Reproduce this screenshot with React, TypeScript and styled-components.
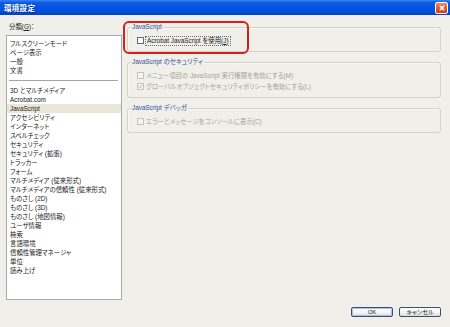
import styled, { createGlobalStyle } from "styled-components";

const GlobalStyle = createGlobalStyle`
   html, body {
      margin: 0;
      padding: 0;
      width: 450px;
      height: 327px;
      overflow: hidden;
      background: #f0efea;
   }
`;

const Window = styled.div`
   position: relative;
   width: 450px;
   height: 327px;
   display: flex;
   flex-direction: column;
   background: #f0efea;
   color: #1a1a1a;
   font-family: "Liberation Sans", "Noto Sans CJK JP", sans-serif;
   font-size: 6.4px;
   font-feature-settings: "palt";
   box-sizing: border-box;
`;

const TitleBar = styled.div`
   height: 15px;
   flex: none;
   display: flex;
   align-items: center;
   justify-content: space-between;
   padding: 0 2px 0 4px;
   background: linear-gradient(180deg, #3d83f2 0%, #0b5ae6 18%, #0054e0 55%, #004cd6 85%, #0a3fbd 100%);
`;

const Title = styled.span`
   color: #ffffff;
   font-size: 7.5px;
   font-weight: bold;
   letter-spacing: 0.3px;
   text-shadow: 1px 1px 0 rgba(0, 0, 40, 0.45);
`;

const CloseButton = styled.div`
   width: 13px;
   height: 12px;
   display: flex;
   align-items: center;
   justify-content: center;
   box-sizing: border-box;
   border: 1px solid #ffffff;
   border-radius: 2px;
   background: linear-gradient(180deg, #f08a6a 0%, #e0562f 55%, #c8401c 100%);
`;

const Body = styled.div`
   flex: 1;
   min-height: 0;
   display: grid;
   grid-template-columns: 116px 1fr;
   column-gap: 5px;
   padding: 7px 9px 0 6px;
`;

const Sidebar = styled.div`
   display: flex;
   flex-direction: column;
`;

const FieldLabel = styled.div`
   height: 10px;
   line-height: 10px;
   padding-left: 3px;
   margin-bottom: 3px;
`;

const CategoryList = styled.ul`
   height: 265px;
   margin: 0;
   padding: 3px 0 0;
   list-style: none;
   box-sizing: border-box;
   background: #ffffff;
   border: 1px solid #a5abb3;
   overflow: hidden;
`;

const CategoryItem = styled.li<{ $selected?: boolean }>`
   height: 9px;
   line-height: 9px;
   padding-left: 3px;
   white-space: nowrap;
   background: ${(p) => (p.$selected ? "#ebe7d8" : "transparent")};
`;

const Separator = styled.li`
   height: 11px;
   display: flex;
   align-items: center;
   padding: 0 3px 0 2px;

   &::after {
      content: "";
      flex: 1;
      height: 1px;
      background: #a4a4a4;
   }
`;

const Panels = styled.div`
   display: flex;
   flex-direction: column;
   gap: 5px;
`;

const Group = styled.fieldset`
   margin: 0;
   padding: 3px 8px 5px 9px;
   min-width: 0;
   border: 1px solid #d4d1c5;
   border-radius: 3px;
   box-shadow: inset 1px 1px 0 #f8f7f3;
`;

const Legend = styled.legend`
   margin-left: -6px;
   padding: 0 1px;
   height: 10px;
   line-height: 10px;
   color: #2e4f96;
`;

const CheckRow = styled.div<{ $disabled?: boolean }>`
   display: flex;
   align-items: center;
   gap: 2px;
   height: 11px;
   white-space: nowrap;
   color: ${(p) => (p.$disabled ? "#a3a29c" : "#1a1a1a")};
`;

const CheckBox = styled.span<{ $disabled?: boolean }>`
   width: 7px;
   height: 7px;
   flex: none;
   box-sizing: border-box;
   display: flex;
   align-items: center;
   justify-content: center;
   border: 1px solid ${(p) => (p.$disabled ? "#c4c3bc" : "#5b6b80")};
   background: ${(p) => (p.$disabled ? "#f4f3ee" : "#ffffff")};
`;

const FocusLabel = styled.span`
   outline: 1px dotted #6a6a6a;
   outline-offset: 0;
   padding: 0 1px;
   line-height: 8px;
`;

const Footer = styled.div`
   flex: none;
   display: flex;
   justify-content: flex-end;
   gap: 6px;
   padding: 7px 9px 10px;
`;

const Button = styled.button<{ $default?: boolean }>`
   width: 42px;
   height: 10px;
   padding: 0;
   box-sizing: border-box;
   font: inherit;
   font-size: 6px;
   line-height: 8px;
   color: #1a1a1a;
   border: 1px solid #3a5078;
   border-radius: 2px;
   background: linear-gradient(180deg, #ffffff 0%, #f4f3ee 60%, #dedbcf 100%);
   box-shadow: ${(p) => (p.$default ? "inset 0 0 0 1px #a8bfe8" : "none")};
`;

const Annotation = styled.div`
   position: absolute;
   left: 123px;
   top: 21px;
   width: 126px;
   height: 33px;
   box-sizing: border-box;
   border: 2px solid #d8201e;
   border-radius: 6px;
   pointer-events: none;
`;

const categories = [
   "3D とマルチメディア",
   "Acrobat.com",
   "JavaScript",
   "アクセシビリティ",
   "インターネット",
   "スペルチェック",
   "セキュリティ",
   "セキュリティ (拡張)",
   "トラッカー",
   "フォーム",
   "マルチメディア (従来形式)",
   "マルチメディアの信頼性 (従来形式)",
   "ものさし (2D)",
   "ものさし (3D)",
   "ものさし (地図情報)",
   "ユーザ情報",
   "検索",
   "言語環境",
   "信頼性管理マネージャ",
   "単位",
   "読み上げ",
];

const Check = () => (
   <svg width="5" height="5" viewBox="0 0 5 5">
      <path d="M0.6 2.4 L1.9 3.7 L4.4 1" fill="none" stroke="#b5b4ae" strokeWidth="1" />
   </svg>
);

export default function App() {
   return (
      <>
         <GlobalStyle />
         <Window>
            <TitleBar>
               <Title>環境設定</Title>
               <CloseButton>
                  <svg width="6" height="6" viewBox="0 0 6 6">
                     <path d="M0.8 0.8 L5.2 5.2 M5.2 0.8 L0.8 5.2" stroke="#ffffff" strokeWidth="1.4" />
                  </svg>
               </CloseButton>
            </TitleBar>

            <Body>
               <Sidebar>
                  <FieldLabel>
                     分類(<u>G</u>)：
                  </FieldLabel>
                  <CategoryList>
                     <CategoryItem>フルスクリーンモード</CategoryItem>
                     <CategoryItem>ページ表示</CategoryItem>
                     <CategoryItem>一般</CategoryItem>
                     <CategoryItem>文書</CategoryItem>
                     <Separator />
                     {categories.map((c) => (
                        <CategoryItem key={c} $selected={c === "JavaScript"}>
                           {c}
                        </CategoryItem>
                     ))}
                  </CategoryList>
               </Sidebar>

               <Panels>
                  <Group>
                     <Legend>JavaScript</Legend>
                     <CheckRow>
                        <CheckBox />
                        <FocusLabel>
                           Acrobat JavaScript を使用(<u>J</u>)
                        </FocusLabel>
                     </CheckRow>
                  </Group>

                  <Group>
                     <Legend>JavaScript のセキュリティ</Legend>
                     <CheckRow $disabled>
                        <CheckBox $disabled />
                        メニュー項目の JavaScript 実行権限を有効にする(M)
                     </CheckRow>
                     <CheckRow $disabled>
                        <CheckBox $disabled>
                           <Check />
                        </CheckBox>
                        グローバルオブジェクトセキュリティポリシーを有効にする(L)
                     </CheckRow>
                  </Group>

                  <Group>
                     <Legend>JavaScript デバッガ</Legend>
                     <CheckRow $disabled>
                        <CheckBox $disabled />
                        エラーとメッセージをコンソールに表示(C)
                     </CheckRow>
                  </Group>
               </Panels>
            </Body>

            <Footer>
               <Button $default>OK</Button>
               <Button>キャンセル</Button>
            </Footer>

            <Annotation />
         </Window>
      </>
   );
}
